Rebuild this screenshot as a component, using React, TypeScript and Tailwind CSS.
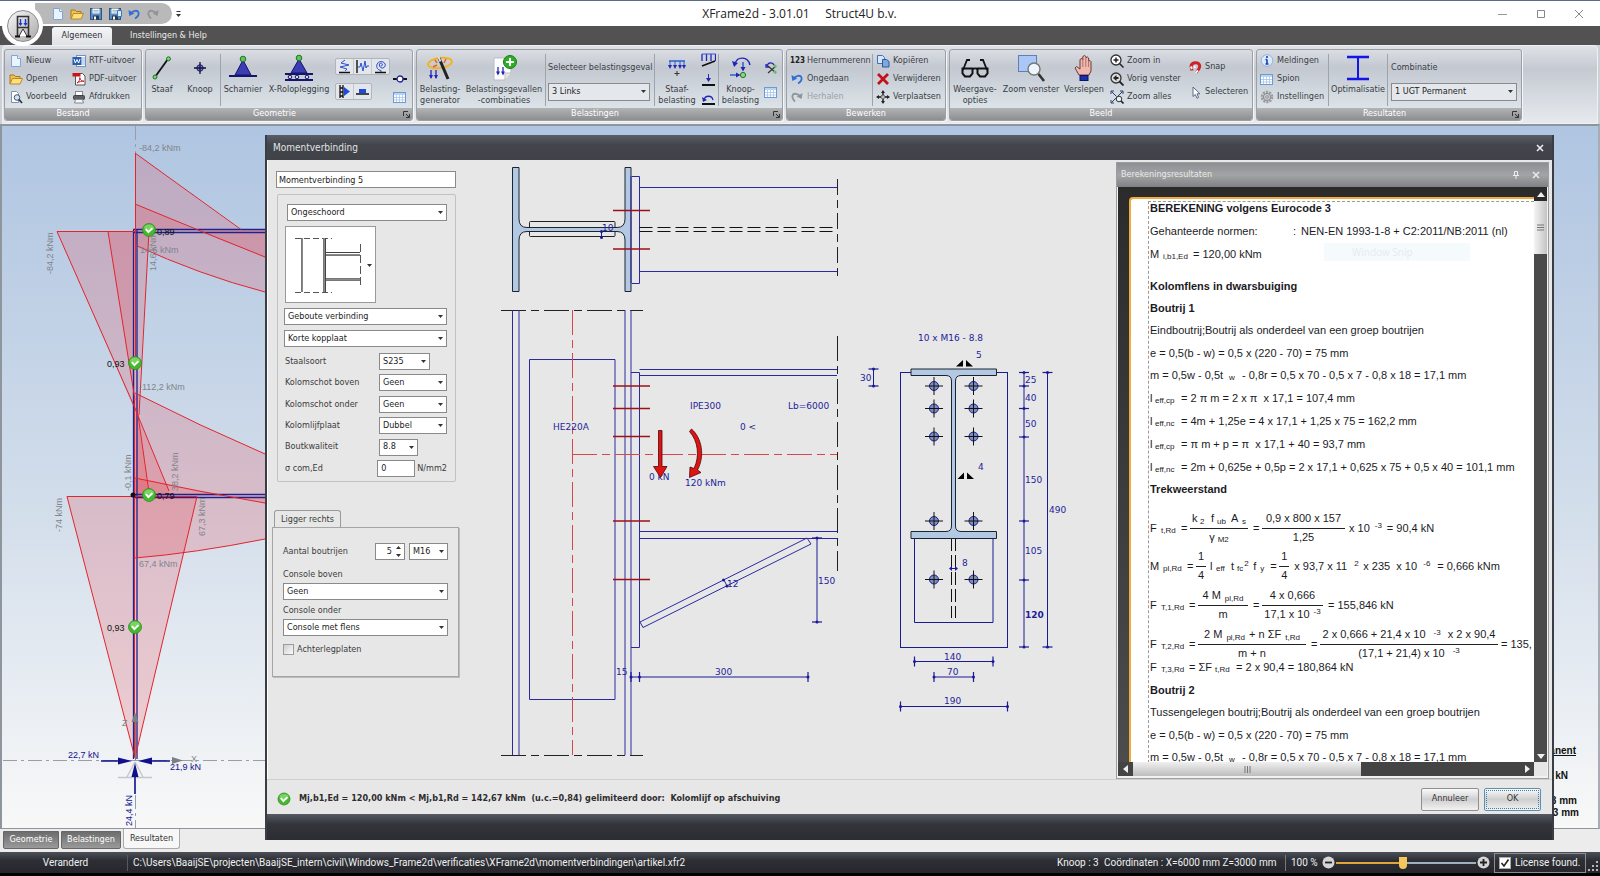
import React from 'react';

type Kids = { children?: React.ReactNode };

/* ---------- form controls ---------- */

function Select({ label, options, className = '', ribbon = false, id }: { label?: string; options: string[]; className?: string; ribbon?: boolean; id?: string }) {
  return (
    <div className={'relative ' + className}>
      <select
        id={id}
        aria-label={label}
        className={
          'block w-full appearance-none border border-[#8a8a8a] pl-[3px] pr-3 text-[9px] text-[#1d1d1d] outline-none ' +
          (ribbon ? 'h-[18px] bg-[#e4e8ec]' : 'h-[17px] bg-white')
        }
      >
        {options.map((o) => (
          <option key={o}>{o}</option>
        ))}
      </select>
      <svg className="pointer-events-none absolute right-1 top-[7px]" width="5" height="3" viewBox="0 0 5 3">
        <path d="M0 0h5L2.500 3z" fill="#333" />
      </svg>
    </div>
  );
}

function FieldRow({ label, id, children }: Kids & { label: string; id: string }) {
  return (
    <div className="flex h-[17px] items-center">
      <label htmlFor={id} className="w-[95px] pl-px">
        {label}
      </label>
      {children}
    </div>
  );
}

/* ---------- ribbon ---------- */

function Svg({ w, h = w, box, children }: Kids & { w: number; h?: number; box?: string }) {
  return (
    <svg width={w} height={h} viewBox={box ?? `0 0 ${w} ${h}`} fill="none" className="shrink-0">
      {children}
    </svg>
  );
}

const NewIcon = () => (
  <Svg w={14}>
    <path d="M2.500 1.500h6l3 3v8h-9z" fill="#eaf4ff" stroke="#7ea6d8" />
    <path d="M8.500 1.500v3h3" stroke="#7ea6d8" fill="#fff" />
  </Svg>
);
const OpenIcon = () => (
  <Svg w={14}>
    <path d="M1 12V3h4l1.500 1.500H11V7" fill="#f2c14b" stroke="#a9781c" />
    <path d="M1 12l2.500-5.500H13.500L11 12z" fill="#ffdf7e" stroke="#b98a25" />
  </Svg>
);
const PreviewIcon = () => (
  <Svg w={14}>
    <path d="M2.500 1.500h5l2 2v9h-7z" fill="#fff" stroke="#8192ab" />
    <circle cx="8" cy="7.500" r="2.800" fill="#cfe3f5" stroke="#44546c" />
    <path d="M10 9.500l3 3.500" stroke="#2c3442" strokeWidth="1.800" />
  </Svg>
);
const WordIcon = () => (
  <Svg w={14}>
    <rect x="4.500" y="1.500" width="9" height="11" fill="#fff" stroke="#6f93c8" />
    <path d="M10 4h3M10 6h3M10 8h3M10 10h3" stroke="#8fb0dc" />
    <rect x="0.500" y="3" width="9" height="8" fill="#2a5db0" />
    <path d="M2 5l1.300 4L5 5.500 6.600 9 8 5" stroke="#fff" />
  </Svg>
);
const PdfIcon = () => (
  <Svg w={14}>
    <path d="M3.500 1.500h7l2.500 2.500v9h-9.500z" fill="#fff" stroke="#555" />
    <rect x="0.500" y="1" width="8" height="3.500" fill="#c8141b" />
    <path d="M5 11c2-1 3-3.500 2.800-5.500 .2 2.500 2 3.700 4.200 3.700-2.500-.2-5 .6-7 1.800z" stroke="#d4202a" />
  </Svg>
);
const PrintIcon = () => (
  <Svg w={14}>
    <rect x="3.500" y="1.500" width="7" height="4" fill="#fff" stroke="#888" />
    <rect x="1.500" y="5.500" width="11" height="4" rx="1" fill="#5b5f66" stroke="#3f4247" />
    <path d="M3.500 9.500h7l1 3.500h-9z" fill="#f4f4f4" stroke="#888" />
  </Svg>
);
const SaveIcon = ({ extra = false }: { extra?: boolean }) => (
  <Svg w={14}>
    <rect x="1.500" y="1.500" width="11" height="11" fill="#5b8cc4" stroke="#2f5585" />
    <rect x="3.500" y="1.500" width="7" height="5" fill="#f4f6f8" />
    <path d="M4.500 3.500h5M4.500 5h5" stroke="#9aa" strokeWidth="0.800" />
    <rect x="4" y="8.500" width="6" height="4" fill="#253a55" />
    <rect x="5" y="9.500" width="2" height="3" fill="#fff" />
    {extra && <path d="M9.500 3.500h4v6h-4z" fill="#d9ecff" stroke="#3d78bd" />}
  </Svg>
);
const UndoIcon = ({ color = '#2f6fd6' }: { color?: string }) => (
  <Svg w={14}>
    <path d="M4 6.500c1.500-3 6.500-3.800 7.500-1 .7 2.500-1 4.500-3.500 6" stroke={color} strokeWidth="1.800" />
    <path d="M1.500 3l.8 6 5-2.500z" fill={color} />
  </Svg>
);
const RedoIcon = () => (
  <Svg w={14}>
    <path d="M10 6.500c-1.500-3-6.500-3.800-7.500-1-.7 2.500 1 4.500 2.500 6" stroke="#8f949b" strokeWidth="1.800" />
    <path d="M12.500 3l-.8 6-5-2.500z" fill="#8f949b" />
  </Svg>
);
const TableIcon = () => (
  <Svg w={13}>
    <rect x="0.500" y="1.500" width="12" height="10" fill="#fff" stroke="#6c9ad6" />
    <rect x="1" y="2" width="11" height="2" fill="#b9d4f3" />
    <path d="M3.500 4v7M6.500 4v7M9.500 4v7M1 6.500h11M1 9h11" stroke="#a8c4e6" strokeWidth="0.800" />
  </Svg>
);
const CheckBall = ({ x, y, r = 6.5 }: { x: number; y: number; r?: number }) => (
  <g>
    <circle cx={x} cy={y} r={r} fill="#46b82e" stroke="#2f8f1f" strokeWidth="0.800" />
    <ellipse cx={x} cy={y - r / 3} rx={r * 0.75} ry={r * 0.5} fill="#9be58a" opacity="0.600" />
    <path d={`M${x - 3.2} ${y - 0.8}l2.600 3 4-4`} stroke="#fff" strokeWidth="1.900" fill="none" />
  </g>
);

function Group({ title, corner, className = '', body = '', children }: Kids & { title: string; corner?: boolean; className?: string; body?: string }) {
  return (
    <section className={'flex h-[72px] shrink-0 flex-col overflow-hidden rounded-[3px] border border-[#9b9fa6] bg-linear-to-b from-[#dadde2] via-[#c3c8d1] via-25% to-[#e4ecef] shadow-[1px_1px_0_#f3f5f7] ' + className}>
      <div className={'flex min-h-0 flex-1 items-start ' + body}>{children}</div>
      <h2 className="flex h-3 items-center justify-center bg-linear-to-b from-[#b2b3b5] to-[#8d8e90] text-[9px] text-white">
        <span className="flex-1 text-center">{title}</span>
        {corner && (
          <button aria-label={title + ' opties'} className="pr-[2px]">
            <Svg w={7}>
              <path d="M0.500 5V0.500H5M3 3l3 3M6.500 3v3.500H3" stroke="#333" />
            </Svg>
          </button>
        )}
      </h2>
    </section>
  );
}

const Sep = ({ className = '' }: { className?: string }) => <div className={'mt-1 h-[52px] w-px shrink-0 bg-[#9ea4ad] ' + className} />;

function BigTool({ icon, lines, className }: { icon: React.ReactNode; lines: string[]; className: string }) {
  return (
    <button className={'flex shrink-0 flex-col items-center whitespace-nowrap pt-[2px] text-[9px] leading-[11px] text-[#3a3d44] ' + className}>
      <span className="flex h-8 items-center justify-center">{icon}</span>
      {lines.map((l) => (
        <span key={l}>{l}</span>
      ))}
    </button>
  );
}

function SmallTool({ icon, label, muted }: { icon: React.ReactNode; label: string; muted?: boolean }) {
  return (
    <button className={'flex h-[18px] items-center gap-[3px] whitespace-nowrap text-[9px] ' + (muted ? 'text-[#9da1a8]' : 'text-[#3a3d44]')}>
      {icon}
      {label}
    </button>
  );
}

const loadArrows = 'M1 1v7M5.500 1v7M10 1v7M14.500 1v7';

function Ribbon() {
  return (
    <div className="mx-[2px] flex gap-[3px] rounded-t-[4px] border border-[#eef0f3] bg-linear-to-b from-[#dfe2e6] via-[#c5cad2] via-30% to-[#e6eaee] px-px pb-[2px] pt-[3px]">
      <Group title="Bestand" className="w-[138px]" body="pl-1 pt-[2px]">
        <div className="w-[63px]">
          <SmallTool icon={<NewIcon />} label="Nieuw" />
          <SmallTool icon={<OpenIcon />} label="Openen" />
          <SmallTool icon={<PreviewIcon />} label="Voorbeeld" />
        </div>
        <div>
          <SmallTool icon={<WordIcon />} label="RTF-uitvoer" />
          <SmallTool icon={<PdfIcon />} label="PDF-uitvoer" />
          <SmallTool icon={<PrintIcon />} label="Afdrukken" />
        </div>
      </Group>

      <Group title="Geometrie" corner className="w-[268px]" body="pl-[2px]">
        <BigTool
          className="w-7"
          lines={['Staaf']}
          icon={
            <Svg w={20} h={24}>
              <path d="M3 21L16 3" stroke="#111" strokeWidth="1.800" />
              <circle cx="3" cy="21" r="2" fill="#7fd07f" stroke="#1e7a1e" />
              <circle cx="16.500" cy="2.800" r="2" fill="#7fd07f" stroke="#1e7a1e" />
            </Svg>
          }
        />
        <BigTool
          className="ml-2 w-8"
          lines={['Knoop']}
          icon={
            <Svg w={14}>
              <circle cx="7" cy="7" r="3.200" fill="#8080d8" stroke="#20206a" />
              <path d="M7 1v12M1 7h12" stroke="#10103c" strokeWidth="1.300" />
            </Svg>
          }
        />
        <Sep className="ml-1" />
        <BigTool
          className="ml-[2px] w-10"
          lines={['Scharnier']}
          icon={
            <Svg w={28} h={26}>
              <path d="M14 5l8 15H6z" fill="#3c3cb4" stroke="#15156a" />
              <path d="M0 21h28" stroke="#15156a" strokeWidth="2" />
              <circle cx="14" cy="4" r="2.800" fill="#63c163" stroke="#1e7a1e" />
            </Svg>
          }
        />
        <BigTool
          className="ml-[3px] w-[66px]"
          lines={['X-Roloplegging']}
          icon={
            <Svg w={28} h={28}>
              <path d="M14 5l8 14H6z" fill="#3c3cb4" stroke="#15156a" />
              <path d="M0 20h28M0 26h28" stroke="#15156a" strokeWidth="1.800" />
              <circle cx="5" cy="23" r="1.800" fill="#ddd" stroke="#15156a" />
              <circle cx="12" cy="23" r="1.800" fill="#ddd" stroke="#15156a" />
              <circle cx="22" cy="23" r="1.800" fill="#ddd" stroke="#15156a" />
              <circle cx="14" cy="4" r="2.800" fill="#63c163" stroke="#1e7a1e" />
            </Svg>
          }
        />
        <div className="ml-[3px] flex flex-col items-start gap-2 pt-2">
          <div className="flex rounded-[2px] border border-[#b0b5bc] bg-[#e3e6ea]">
            <button aria-label="Veer verticaal" className="px-[2px]">
              <Svg w={13} h={15}>
                <path d="M7 1l-4 3 8 2-9 2 7 2-2 2" stroke="#2b4fd0" />
                <path d="M1 13.500h11" stroke="#111" strokeWidth="1.400" />
              </Svg>
            </button>
            <button aria-label="Veer horizontaal" className="border-x border-[#c4c8ce] px-[2px]">
              <Svg w={13} h={15}>
                <path d="M1 1v13" stroke="#111" strokeWidth="1.400" />
                <path d="M2 8h2l1-4 2 8 2-10 1 7 1-2h2" stroke="#2b4fd0" />
              </Svg>
            </button>
            <button aria-label="Rotatieveer" className="px-[2px]">
              <Svg w={13} h={15}>
                <path d="M6.500 7a1.500 1.500 0 1 0-1-2 3 3 0 1 0 5-1A4.500 4.500 0 1 0 7 11.500v2" stroke="#2b4fd0" />
                <path d="M1 13.500h11" stroke="#111" strokeWidth="1.400" />
              </Svg>
            </button>
          </div>
          <div className="flex rounded-[2px] border border-[#b0b5bc] bg-[#e3e6ea]">
            <button aria-label="Rolverbinding" className="border-r border-[#c4c8ce] px-[2px]">
              <Svg w={13} h={15}>
                <path d="M2 1v13M5 1v13M2 4h3M2 8h3M2 12h3" stroke="#111" strokeWidth="1.300" />
                <path d="M6 3l6 4.500L6 12z" fill="#1d4be0" />
              </Svg>
            </button>
            <button aria-label="Inklemming" className="px-[2px]">
              <Svg w={13} h={15}>
                <rect x="3" y="5" width="7" height="4" fill="#1d4be0" />
                <path d="M0 10h13" stroke="#111" strokeWidth="1.600" />
              </Svg>
            </button>
          </div>
        </div>
        <div className="ml-[3px] flex flex-col gap-[5px] pt-[22px]">
          <Svg w={14}>
            <path d="M0 7h4M10 7h4" stroke="#111" strokeWidth="2" />
            <circle cx="7" cy="7" r="3" fill="#fff" stroke="#2828a0" strokeWidth="1.300" />
          </Svg>
          <TableIcon />
        </div>
      </Group>

      <Group title="Belastingen" corner className="w-[367px]">
        <BigTool
          className="w-[46px]"
          lines={['Belasting-', 'generator']}
          icon={
            <Svg w={28}>
              <ellipse cx="14" cy="9" rx="12" ry="5" stroke="#f0b429" strokeWidth="2" transform="rotate(-8 14 9)" />
              <path d="M13 4l9 21" stroke="#222" strokeWidth="3" />
              <path d="M12.500 3l2 4.500" stroke="#ddd" strokeWidth="2" />
              <path d="M9 6l2 3M20 5l-2 4M7 13l4-2" stroke="#e8641e" strokeWidth="1.500" />
              <path d="M5 16v8M10 16v8" stroke="#2326b5" strokeWidth="1.300" />
              <path d="M3 21l2 4 2-4zM8 21l2 4 2-4z" fill="#2326b5" />
            </Svg>
          }
        />
        <BigTool
          className="w-[82px]"
          lines={['Belastingsgevallen', '-combinaties']}
          icon={
            <Svg w={28}>
              <path d="M4 4h17v15l-6 7H4z" fill="#fdfdfd" stroke="#b9bdc4" />
              <path d="M21 19h-6v7" fill="#e4e6ea" stroke="#b9bdc4" />
              <path d="M8 13v7M13 13v7" stroke="#2326b5" strokeWidth="1.300" />
              <path d="M6 17.500l2 4 2-4zM11 17.500l2 4 2-4z" fill="#2326b5" />
              <circle cx="20" cy="8" r="6.500" fill="#2eae25" stroke="#1b7d15" />
              <path d="M20 4v8M16 8h8" stroke="#fff" strokeWidth="2" />
            </Svg>
          }
        />
        <Sep />
        <div className="ml-[2px] flex w-[102px] flex-col pt-[11px] text-[9px] text-[#3a3d44]">
          <label htmlFor="lc" className="whitespace-nowrap leading-[12px]">
            Selecteer belastingsgeval
          </label>
          <Select id="lc" ribbon className="mt-[10px]" options={['3 Links', '1 Permanent', '2 Veranderlijk']} />
        </div>
        <Sep className="ml-1" />
        <BigTool
          className="w-[44px]"
          lines={['Staaf-', 'belasting']}
          icon={
            <Svg w={18} h={18}>
              <path d="M1 2h16" stroke="#2c5fd0" strokeWidth="1.600" />
              <path d="M2 2v5M7 2v5M12 2v5M16 2v5" stroke="#2c5fd0" />
              <path d="M0 6l2 4 2-4zM5 6l2 4 2-4zM10 6l2 4 2-4zM14 6l2 4 2-4z" fill="#2326b5" />
              <path d="M9 12v5M6.500 14.500h5" stroke="#333" />
            </Svg>
          }
        />
        <div className="flex w-[18px] flex-col items-center gap-[5px] pt-[3px]">
          <Svg w={15}>
            <path d={loadArrows} stroke="#2326b5" strokeWidth="1.300" />
            <path d="M1 1h14" stroke="#2c5fd0" />
            <path d="M1 13L14 8" stroke="#111" strokeWidth="1.800" />
          </Svg>
          <Svg w={15}>
            <path d="M7.500 1v6" stroke="#2326b5" />
            <path d="M5 5l2.500 4L10 5z" fill="#2326b5" />
            <path d="M1 12h13" stroke="#111" strokeWidth="1.800" />
          </Svg>
          <Svg w={15} h={13}>
            <path d="M3 7c1-5 8-5 9 0" stroke="#2326b5" strokeWidth="1.300" />
            <path d="M1 4l1 5 4-2z" fill="#2326b5" />
            <path d="M1 11h13" stroke="#111" strokeWidth="1.800" />
          </Svg>
        </div>
        <Sep className="ml-px" />
        <BigTool
          className="w-[43px]"
          lines={['Knoop-', 'belasting']}
          icon={
            <Svg w={24}>
              <path d="M6 8C8 0 19 0 21 9" stroke="#2326b5" strokeWidth="1.400" />
              <path d="M3 5l2 6 4-4z" fill="#2326b5" />
              <path d="M14 6v7M1 19h7" stroke="#2c5fd0" strokeWidth="1.500" />
              <path d="M11.500 11l2.500 4.500L16.500 11zM7 16.500l4.500 2.500L7 21.500z" fill="#2326b5" />
              <circle cx="14" cy="19" r="2.600" fill="#8fd08f" stroke="#1e7a1e" />
            </Svg>
          }
        />
        <div className="flex flex-col items-center gap-3 pl-[2px] pt-[11px]">
          <Svg w={13}>
            <path d="M3 5c1-4 6-4 7-1M2 3v3h3" stroke="#2326b5" strokeWidth="1.300" />
            <path d="M4 5l8 7M12 5l-8 7" stroke="#333" strokeWidth="1.200" />
            <circle cx="11" cy="11" r="1.600" fill="#63c163" />
            <circle cx="11" cy="5" r="1.600" fill="#63c163" />
          </Svg>
          <TableIcon />
        </div>
      </Group>

      <Group title="Bewerken" className="w-[160px]" body="pl-[3px] pt-[2px]">
        <div className="w-[82px]">
          <SmallTool icon={<b className="w-[14px] text-[8px] leading-none text-[#222]">123</b>} label="Hernummerenn" />
          <SmallTool icon={<UndoIcon />} label="Ongedaan" />
          <SmallTool icon={<RedoIcon />} label="Herhalen" muted />
        </div>
        <div className="mt-[2px] h-[52px] w-px shrink-0 bg-[#9ea4ad]" />
        <div className="pl-[3px]">
          <SmallTool
            icon={
              <Svg w={14}>
                <path d="M1.500 1.500h5l2 2v6h-7z" fill="#d5e6fb" stroke="#3f72b8" />
                <path d="M6.500 5.500h4l2.500 2v5.500H6.500z" fill="#7ea9e0" stroke="#2c5a9c" />
              </Svg>
            }
            label="Kopiëren"
          />
          <SmallTool
            icon={
              <Svg w={14}>
                <path d="M2 2l10 10M12 2L2 12" stroke="#c4101a" strokeWidth="2.800" />
              </Svg>
            }
            label="Verwijderen"
          />
          <SmallTool
            icon={
              <Svg w={14}>
                <path d="M7 2v3M7 9v3M2 7h3M9 7h3" stroke="#111" strokeWidth="1.400" />
                <path d="M5 3l2-3 2 3zM5 11l2 3 2-3zM3 5L0 7l3 2zM11 5l3 2-3 2z" fill="#222" />
                <rect x="5.500" y="5.500" width="3" height="3" fill="#bbb" stroke="#555" strokeWidth="0.600" />
              </Svg>
            }
            label="Verplaatsen"
          />
        </div>
      </Group>

      <Group title="Beeld" className="w-[304px]">
        <BigTool
          className="w-[50px]"
          lines={['Weergave-', 'opties']}
          icon={
            <Svg w={28} h={20}>
              <path d="M2 12L6 2h3M26 12L22 2h-3" stroke="#111" strokeWidth="1.800" />
              <path d="M1.500 10.500h10v5l-2.500 3H4l-2.500-3zM16.500 10.500h10v5L24 18.500h-5l-2.500-3zM11.500 11.500c1.500-1.500 3.500-1.500 5 0" stroke="#111" strokeWidth="2" />
            </Svg>
          }
        />
        <BigTool
          className="w-[62px]"
          lines={['Zoom venster']}
          icon={
            <Svg w={30} h={30}>
              <rect x="2.500" y="2.500" width="18" height="16" fill="#a9c8f5" stroke="#5f7fb0" />
              <circle cx="18" cy="16" r="6" fill="#eef5fc" stroke="#777" strokeWidth="1.400" />
              <path d="M22.500 21l5.500 7" stroke="#333" strokeWidth="2.600" />
            </Svg>
          }
        />
        <BigTool
          className="w-[44px]"
          lines={['Verslepen']}
          icon={
            <Svg w={20} h={28}>
              <path d="M5 21L1 14l1.500-1.500L6 15V5.500l1.800-1 1 1V2.500l1.800-1 1.200 1v1l1.600-.5 1.200 1v3l1.400-.4 1 1V17l-2 4z" fill="#f0b8ae" stroke="#6a3a38" />
              <path d="M8.800 5v8M11.800 4v9M14.600 6v7" stroke="#a0605c" strokeWidth="0.800" />
              <rect x="6" y="21.500" width="8" height="5" fill="#1b2fa8" stroke="#0b1460" />
            </Svg>
          }
        />
        <div className="w-[79px] pl-[4px] pt-[2px]">
          <SmallTool
            icon={
              <Svg w={14}>
                <circle cx="6" cy="6" r="5" fill="#fff" stroke="#333" strokeWidth="1.300" />
                <path d="M3.500 6h5M6 3.500v5M9.500 9.500l4 4" stroke="#222" strokeWidth="1.500" />
              </Svg>
            }
            label="Zoom in"
          />
          <SmallTool
            icon={
              <Svg w={14}>
                <circle cx="6" cy="6" r="5" fill="#ddd" stroke="#333" strokeWidth="1.300" />
                <path d="M8.500 6h-3M9.500 9.500l4 4" stroke="#222" strokeWidth="1.800" />
                <path d="M6.500 3L3 6l3.500 3z" fill="#222" />
              </Svg>
            }
            label="Vorig venster"
          />
          <SmallTool
            icon={
              <Svg w={14}>
                <path d="M1 4V1h3M10 1h3v3M4 13H1v-3M1.500 1.500l5 5M12.500 1.500l-11 11" stroke="#2b3f66" />
                <circle cx="9" cy="9" r="2.800" fill="#e9f1fa" stroke="#333" />
                <path d="M11 11l2.500 2.500" stroke="#222" strokeWidth="1.600" />
              </Svg>
            }
            label="Zoom alles"
          />
        </div>
        <div className="flex flex-col gap-[7px] pl-1 pt-2">
          <SmallTool
            icon={
              <Svg w={13}>
                <path d="M3 9.500L2 5.500C2.500 1 9 .5 10.500 4c.8 2.500-1 5-3.500 7.500" stroke="#cf2323" strokeWidth="3" />
                <path d="M3 8L1.800 5.500M9 9.500l-2.500 2.200" stroke="#f2f2f2" strokeWidth="2" />
                <circle cx="5.800" cy="6" r="1" fill="#fff" />
              </Svg>
            }
            label="Snap"
          />
          <SmallTool
            icon={
              <Svg w={13}>
                <path d="M4 1v9.500l2.300-2 1.700 3.800 1.600-.8L8 7.800h3z" fill="#fff" stroke="#5a6a85" />
              </Svg>
            }
            label="Selecteren"
          />
        </div>
      </Group>

      <Group title="Resultaten" corner className="w-[266px]">
        <div className="w-[71px] pl-[3px] pt-[2px]">
          <SmallTool
            icon={
              <Svg w={14}>
                <circle cx="7" cy="6.500" r="5.800" fill="#dcebfa" stroke="#8eb2dc" />
                <path d="M7 5.500v4.500M5.500 5.500H7M5.500 10h3" stroke="#1b3fae" strokeWidth="1.600" />
                <circle cx="7" cy="3" r="1.100" fill="#1b3fae" />
              </Svg>
            }
            label="Meldingen"
          />
          <SmallTool icon={<span className="pr-px"><TableIcon /></span>} label="Spion" />
          <SmallTool
            icon={
              <Svg w={14}>
                <circle cx="7" cy="7" r="4.800" stroke="#9a9da2" strokeWidth="3" strokeDasharray="2 1" />
                <circle cx="7" cy="7" r="3.600" fill="#c9cbce" stroke="#8a8d92" />
                <circle cx="7" cy="7" r="1.300" fill="#eee" stroke="#8a8d92" />
              </Svg>
            }
            label="Instellingen"
          />
        </div>
        <Sep />
        <BigTool
          className="w-[58px]"
          lines={['Optimalisatie']}
          icon={
            <Svg w={24} h={28}>
              <path d="M1 3h22M1 25h22" stroke="#1414e6" strokeWidth="2.600" />
              <path d="M12 3v22" stroke="#1414e6" strokeWidth="2" />
            </Svg>
          }
        />
        <Sep />
        <div className="ml-[3px] flex w-[126px] flex-col pt-[11px] text-[9px] text-[#3a3d44]">
          <label htmlFor="comb" className="leading-[12px]">
            Combinatie
          </label>
          <Select id="comb" ribbon className="mt-[10px]" options={['1 UGT Permanent', '2 UGT', '3 BGT']} />
        </div>
      </Group>
    </div>
  );
}

/* ---------- frame model behind the dialog ---------- */

function FrameCanvas() {
  const red = '#e2242c';
  return (
    <svg width="270" height="704" viewBox="0 126 270 704" fill="none" className="font-['Liberation_Sans',Arial,sans-serif] text-[9px]">
      <g stroke="#9a9da2" strokeDasharray="14 4 3 4">
        <path d="M135.500 126v27M135.500 795v34M3 760.500h262" />
      </g>
      <g fill="#f0303a" fillOpacity="0.190">
        <path d="M135 153L240 229.500H265V292Q200 275 135 245z" />
        <path d="M135 204Q165 216 195 230L265 257V230H135z" />
        <path d="M57 231H149L138 415 135 411z" />
        <path d="M108 231H135V401z" />
        <path d="M135 393Q200 426 265 454V539Q195 553 135 558z" />
        <path d="M135 411L169 491 170 496H135z" />
        <path d="M137 415L148 489V496H135z" />
        <path d="M135 478L265 503V496H135z" />
        <path d="M67 496H197L135 758z" />
      </g>
      <g stroke="#22208c" strokeWidth="1.300">
        <path d="M133.500 230v529M137 230v529M133 229.500h132M133 232.500h132M133 494.500h132M133 497.500h132" />
      </g>
      <g stroke={red}>
        <path d="M135.500 153V230M135 153L241 229.500M135 204Q200 231 265 257M135 245Q200 275 265 292M135.500 230v130" />
        <path d="M57 231.500H135M57 231.500L138 415M108 231.500L135 400M149 231L139 415M136 411L169 491M138 415L148.500 489" />
        <path d="M135 393Q200 426 265 454M135 478Q200 492 265 503M135 558Q195 553 265 539M134.500 400v357" />
        <path d="M67 496.500H197M67 496.500L135 758M197 496.500L135 758" />
      </g>
      <circle cx="133" cy="495" r="2.500" fill="#111" />
      <g fill="#82858a">
        <text x="139" y="151">-84,2 kNm</text>
        <text x="140" y="253">14,6 kNm</text>
        <text x="139" y="390">-112,2 kNm</text>
        <text x="139" y="567">67,4 kNm</text>
        <text transform="translate(53 274) rotate(-90)">-84,2 kNm</text>
        <text transform="translate(156 271) rotate(-90)">14,6 kNm</text>
        <text transform="translate(131 491) rotate(-90)">-0,1 kNm</text>
        <text transform="translate(178 491) rotate(-90)">38,2 kNm</text>
        <text transform="translate(62 532) rotate(-90)">-74 kNm</text>
        <text transform="translate(205 536) rotate(-90)">67,3 kNm</text>
        <text x="122" y="726">Z</text>
        <text x="191" y="762">X</text>
      </g>
      <g fill="#111">
        <text x="157" y="235">0,89</text>
        <text x="107" y="367">0,93</text>
        <text x="157" y="499">0,79</text>
        <text x="107" y="631">0,93</text>
      </g>
      <CheckBall x={149} y={230} />
      <CheckBall x={135} y={363} />
      <CheckBall x={149} y={495} />
      <CheckBall x={135} y={627} />
      <path d="M118 777.500h34M135 762l-8 15M135 762l8 15" stroke="#c4c6ca" strokeWidth="1.300" />
      <path d="M135 712l-3.500 10h7zM172 757l11 3.500-11 3.500z" fill="#7d7f84" />
      <path d="M135.500 720v40" stroke="#7d7f84" />
      <g stroke="#10108c" strokeWidth="1.600" fill="#10108c">
        <path d="M101 761h22M148 761h22M135 794v-20" />
        <path stroke="none" d="M118 757.500l14 3.500-14 3.500zM152 757.500l-14 3.500 14 3.500zM131.500 777l3.500-14 3.500 14z" />
      </g>
      <g fill="#10108c">
        <text x="68" y="758">22,7 kN</text>
        <text x="170" y="770">21,9 kN</text>
        <text transform="translate(132 826) rotate(-90)">24,4 kN</text>
      </g>
    </svg>
  );
}

/* ---------- connection drawing ---------- */

const sectionTop =
  'M512.500 167.500H519V219Q519 227.500 527 227.500H617Q625 227.500 625 219V167.500H631V291.500H625V240Q625 231.500 617 231.500H527Q519 231.500 519 240V291.500H512.500Z';
const sectionBeam =
  'M911 369H996.500V375.500H961Q955.500 375.500 955.500 381V526Q955.500 531.500 961 531.500H996.500V538.500H911V531.500H946Q951.500 531.500 951.500 526V381Q951.500 375.500 946 375.500H911Z';

function HDim({ x1, x2, y, ticks }: { x1: number; x2: number; y: number; ticks: number[] }) {
  return (
    <g stroke="#1a1a96">
      <path d={`M${x1} ${y}H${x2}`} />
      {ticks.map((t) => (
        <g key={t}>
          <path d={`M${t} ${y - 5}v10`} strokeWidth="1.200" />
          <circle cx={t} cy={y} r="1.500" fill="#1a1a96" stroke="none" />
        </g>
      ))}
    </g>
  );
}

function VDim({ y1, y2, x, ticks }: { y1: number; y2: number; x: number; ticks: number[] }) {
  return (
    <g stroke="#1a1a96">
      <path d={`M${x} ${y1}V${y2}`} />
      {ticks.map((t) => (
        <g key={t}>
          <path d={`M${x - 5} ${t}h10`} strokeWidth="1.200" />
          <circle cx={x} cy={t} r="1.500" fill="#1a1a96" stroke="none" />
        </g>
      ))}
    </g>
  );
}

function ConnectionDrawing() {
  const bolts = [386, 408.5, 436.5, 521, 579.5];
  return (
    <svg width="632" height="616" viewBox="480 162 632 616" fill="none" className="font-['DejaVu_Sans',Verdana,sans-serif] text-[9px]">
      {/* plan */}
      <rect x="529.500" y="221.500" width="85.500" height="15" rx="1" stroke="#222" />
      <path d={sectionTop} fill="#b3c8e2" stroke="#1c2430" />
      <g stroke="#2a2aa0">
        <path d="M631.500 176.500H639.500V283.500H631.500M631 176.500V283M639.500 187.500H837M639.500 271.500H837" />
      </g>
      <path d="M639.500 227.500H837M639.500 231.500H837" stroke="#111" strokeDasharray="13 5" />
      <path d="M601.500 231v7" stroke="#1a1a96" />
      <circle cx="601.500" cy="231.500" r="1.500" fill="#1a1a96" />
      <circle cx="601.500" cy="237.500" r="1.500" fill="#1a1a96" />

      {/* break lines */}
      <g stroke="#222" strokeDasharray="25 5 8 5">
        <path d="M501 310.500H643M501 755.500H643M837.500 336V571" />
        <path d="M837.500 179V280" strokeDasharray="16 5 8 5" />
      </g>

      {/* elevation */}
      <g stroke="#2a2aa0">
        <path d="M512.500 310V755M519 310V755M625 310V755M631 310V755" />
        <path d="M529.500 359.500H615V699.500H529.500Z" />
        <path d="M631 372.500H639.500V647.500H631" />
        <path d="M639.500 369.500H837M639.500 375.500H837M639.500 531.500H837M639.500 538.500H837" />
        <path d="M640 622L807 538 811 544 643 627.500Z" />
        <path d="M724 580l3 6" />
      </g>
      <circle cx="723.500" cy="580" r="1.500" fill="#1a1a96" />
      <circle cx="727" cy="586" r="1.500" fill="#1a1a96" />
      <g stroke="#d8474c" strokeDasharray="25 5 8 5">
        <path d="M572.500 310V755M572 454.500H837" />
      </g>
      <g stroke="#9c1018" strokeWidth="1.600">
        {[210.5, 249, ...bolts].map((y) => (
          <path key={y} d={`M613 ${y}H650`} />
        ))}
      </g>

      {/* section */}
      <rect x="900.500" y="372.500" width="107" height="275" stroke="#1a1a96" />
      <path d="M914.500 538V622.500H993V538" stroke="#1a1a96" />
      <path d="M951.500 538V618M955.500 538V618" stroke="#111" strokeDasharray="13 4" />
      <path d={sectionBeam} fill="#b3c8e2" stroke="#1c2430" />
      {bolts.map((y) =>
        [934, 973.5].map((x) => (
          <g key={`${x}-${y}`}>
            <circle cx={x} cy={y} r="4.500" fill="#7d8fb8" stroke="#1a1a96" />
            <path d={`M${x - 9} ${y}h18M${x} ${y - 9}v18`} stroke="#111" />
          </g>
        )),
      )}
      <path d="M956 366.500L963 360V366.500ZM966 360V366.500H973ZM957.500 479L964 472.500V479ZM967 472.500V479H974Z" fill="#000" />

      {/* dimensions */}
      <VDim x={873.5} y1={369} y2={386} ticks={[369, 386]} />
      <VDim x={1024} y1={372} y2={647} ticks={[372.5, 386, 408.5, 437, 521, 580, 647]} />
      <VDim x={1047.5} y1={372} y2={647} ticks={[372.5, 647]} />
      <VDim x={817} y1={538} y2={622} ticks={[538, 622]} />
      <HDim x1={631} x2={808} y={677} ticks={[631, 639.5, 808]} />
      <HDim x1={914} x2={993} y={661.5} ticks={[914.5, 993]} />
      <HDim x1={934} x2={973} y={677} ticks={[934, 973.5]} />
      <HDim x1={900} x2={1007} y={706.5} ticks={[900.5, 1007.5]} />
      <HDim x1={950} x2={957} y={568.5} ticks={[]} />
      <path d="M949 568.500l3-2.500v5zM958 568.500l-3-2.500v5z" fill="#1a1a96" />

      <g fill="#1e1e9a">
        <text x="602" y="231">10</text>
        <text x="553" y="430">HE220A</text>
        <text x="690" y="409">IPE300</text>
        <text x="788" y="409">Lb=6000</text>
        <text x="740" y="430">0 &lt;</text>
        <text x="649" y="480">0 kN</text>
        <text x="685" y="486">120 kNm</text>
        <text x="727" y="587">12</text>
        <text x="818" y="584">150</text>
        <text x="616" y="675">15</text>
        <text x="715" y="675">300</text>
        <text x="860" y="381">30</text>
        <text x="918" y="341">10 x M16 - 8.8</text>
        <text x="976" y="358">5</text>
        <text x="978" y="470">4</text>
        <text x="962" y="566">8</text>
        <text x="1025" y="383">25</text>
        <text x="1025" y="401">40</text>
        <text x="1025" y="427">50</text>
        <text x="1025" y="483">150</text>
        <text x="1025" y="554">105</text>
        <text x="1025" y="618" fontWeight="700">120</text>
        <text x="1049" y="513">490</text>
        <text x="944" y="660">140</text>
        <text x="947" y="675">70</text>
        <text x="944" y="704">190</text>
      </g>

      {/* internal forces */}
      <path d="M658.500 430.500h3.500V466.500H667L660.500 477.500 653.500 466.500H658.500Z" fill="#e01212" stroke="#4a0808" strokeWidth="0.800" />
      <path
        d="M691.500 429C702 438 705 456 697.500 470L701 472.500 689.500 477.500 690 467 694 468.500C700 456 698 441 689.500 431.500Z"
        fill="#e01212"
        stroke="#4a0808"
        strokeWidth="0.800"
      />
    </svg>
  );
}

/* ---------- report ---------- */

const Sub = ({ children, className = '' }: Kids & { className?: string }) => <span className={'shrink-0 whitespace-pre pt-[5px] text-[8px] leading-[10px] ' + className}>{children}</span>;
const Sup = ({ children, className = '' }: Kids & { className?: string }) => <span className={'shrink-0 whitespace-pre pb-[5px] text-[8px] leading-[10px] ' + className}>{children}</span>;
const T = ({ children, className = '' }: Kids & { className?: string }) => <span className={'shrink-0 whitespace-pre ' + className}>{children}</span>;
const Line = ({ children, className = '' }: Kids & { className?: string }) => <p className={'flex h-3 items-center leading-3 ' + className}>{children}</p>;
const Heading = ({ children, className = '' }: Kids & { className?: string }) => <h3 className={'h-3 whitespace-nowrap font-bold leading-3 ' + className}>{children}</h3>;
const Formula = ({ children, className = '' }: Kids & { className?: string }) => <div className={'flex h-[35px] items-center ' + className}>{children}</div>;

function Frac({ num, den, className }: { num: React.ReactNode; den: React.ReactNode; className: string }) {
  return (
    <span className={'flex shrink-0 flex-col ' + className}>
      <span className="flex h-[17px] items-start justify-center border-b border-[#222] leading-[13px]">{num}</span>
      <span className="flex h-[17px] items-center justify-center leading-[13px]">{den}</span>
    </span>
  );
}

function EffLine({ sub, text }: { sub: string; text: string }) {
  return (
    <Line className="mt-[11px]">
      <T className="w-[5px]">l</T>
      <Sub className="w-[26px]">{sub}</Sub>
      <T>{text}</T>
    </Line>
  );
}

function MLine() {
  return (
    <Line className="mt-[10px]">
      <T className="w-[79px]">m = 0,5w - 0,5t</T>
      <Sub className="w-[13px]">w</Sub>
      <T>- 0,8r = 0,5 x 70 - 0,5 x 7 - 0,8 x 18 = 17,1 mm</T>
    </Line>
  );
}

function Report() {
  return (
    <div className="ml-[17px] mt-[2px] border-l border-t border-dashed border-[#9a9a9a] pl-px font-['Liberation_Sans',Arial,sans-serif] text-[11px] text-[#1b1b1f]">
      <Heading>BEREKENING volgens Eurocode 3</Heading>
      <Line className="mt-[11px]">
        <T className="w-[143px]">Gehanteerde normen:</T>
        <T className="w-2">:</T>
        <T>NEN-EN 1993-1-8 + C2:2011/NB:2011 (nl)</T>
      </Line>
      <Line className="mt-[11px]">
        <T className="w-[13px]">M</T>
        <Sub className="w-[30px]">i,b1,Ed</Sub>
        <T>= 120,00 kNm</T>
      </Line>
      <Heading className="mt-5">Kolomflens in dwarsbuiging</Heading>
      <Heading className="mt-[10px]">Boutrij 1</Heading>
      <Line className="mt-[10px]">Eindboutrij;Boutrij als onderdeel van een groep boutrijen</Line>
      <Line className="mt-[11px]">e = 0,5(b - w) = 0,5 x (220 - 70) = 75 mm</Line>
      <MLine />
      <EffLine sub="eff,cp" text="= 2 π m = 2 x π  x 17,1 = 107,4 mm" />
      <EffLine sub="eff,nc" text="= 4m + 1,25e = 4 x 17,1 + 1,25 x 75 = 162,2 mm" />
      <EffLine sub="eff,cp" text="= π m + p = π  x 17,1 + 40 = 93,7 mm" />
      <EffLine sub="eff,nc" text="= 2m + 0,625e + 0,5p = 2 x 17,1 + 0,625 x 75 + 0,5 x 40 = 101,1 mm" />
      <Heading className="mt-[10px]">Trekweerstand</Heading>
      <Formula className="mt-4">
        <T className="w-[11px]">F</T>
        <Sub className="w-5">t,Rd</Sub>
        <T className="w-[9px]">=</T>
        <Frac
          className="w-[58px]"
          num={
            <>
              <T className="w-2">k</T>
              <Sub className="w-[11px]">2</Sub>
              <T>f</T>
              <Sub className="w-[17px] pl-[3px]">ub</Sub>
              <T className="w-[11px]">A</T>
              <Sub>s</Sub>
            </>
          }
          den={
            <>
              <T>γ</T>
              <Sub className="pl-[3px]">M2</Sub>
            </>
          }
        />
        <T className="w-[14px] pl-[5px]">=</T>
        <Frac className="w-[83px]" num={<T>0,9 x 800 x 157</T>} den={<T>1,25</T>} />
        <T className="pl-1">x 10</T>
        <Sup className="w-[17px] pl-[5px]">-3</Sup>
        <T>= 90,4 kN</T>
      </Formula>
      <Formula className="mt-[3px]">
        <T className="w-[13px]">M</T>
        <Sub className="w-6">pl,Rd</Sub>
        <T className="w-[9px]">=</T>
        <Frac className="w-[10px]" num={<T>1</T>} den={<T>4</T>} />
        <T className="w-[10px] pl-1">l</T>
        <Sub className="w-[15px]">eff</Sub>
        <T className="w-[6px]">t</T>
        <Sub>fc</Sub>
        <Sup className="w-[10px] pl-px">2</Sup>
        <T className="w-[7px]">f</T>
        <Sub className="w-[10px]">y</Sub>
        <T className="w-[9px]">=</T>
        <Frac className="w-[10px]" num={<T>1</T>} den={<T>4</T>} />
        <T className="w-[65px] pl-[5px]">x 93,7 x 11</T>
        <Sup className="w-[9px]">2</Sup>
        <T className="w-[60px]">x 235  x 10</T>
        <Sup className="w-[14px]">-6</Sup>
        <T>= 0,666 kNm</T>
      </Formula>
      <Formula className="mt-1">
        <T className="w-[11px]">F</T>
        <Sub className="w-[28px]">T,1,Rd</Sub>
        <T className="w-[9px]">=</T>
        <Frac
          className="w-[50px]"
          num={
            <>
              <T>4 M</T>
              <Sub className="pl-1">pl,Rd</Sub>
            </>
          }
          den={<T>m</T>}
        />
        <T className="w-[14px] pl-[5px]">=</T>
        <Frac
          className="w-[61px]"
          num={<T>4 x 0,666</T>}
          den={
            <>
              <T>17,1 x 10</T>
              <Sup className="pl-1">-3</Sup>
            </>
          }
        />
        <T className="pl-[5px]">= 155,846 kN</T>
      </Formula>
      <Formula className="mt-1">
        <T className="w-[11px]">F</T>
        <Sub className="w-[28px]">T,2,Rd</Sub>
        <T className="w-[9px]">=</T>
        <Frac
          className="w-[108px]"
          num={
            <>
              <T>2 M</T>
              <Sub className="px-1">pl,Rd</Sub>
              <T>+ n ΣF</T>
              <Sub className="pl-1">t,Rd</Sub>
            </>
          }
          den={<T>m + n</T>}
        />
        <T className="w-[14px] pl-[5px]">=</T>
        <Frac
          className="w-[178px]"
          num={
            <>
              <T>2 x 0,666 + 21,4 x 10</T>
              <Sup className="pl-2 pr-1">-3</Sup>
              <T> x 2 x 90,4</T>
            </>
          }
          den={
            <>
              <T>(17,1 + 21,4) x 10</T>
              <Sup className="pl-2">-3</Sup>
            </>
          }
        />
        <T className="pl-[3px]">= 135,</T>
      </Formula>
      <Line className="-mt-px">
        <T className="w-[11px]">F</T>
        <Sub className="w-[28px]">T,3,Rd</Sub>
        <T className="w-[26px]">= ΣF</T>
        <Sub className="w-[21px]">t,Rd</Sub>
        <T>= 2 x 90,4 = 180,864 kN</T>
      </Line>
      <Heading className="mt-[11px]">Boutrij 2</Heading>
      <Line className="mt-[10px]">Tussengelegen boutrij;Boutrij als onderdeel van een groep boutrijen</Line>
      <Line className="mt-[11px]">e = 0,5(b - w) = 0,5 x (220 - 70) = 75 mm</Line>
      <MLine />
    </div>
  );
}

function ResultsPanel() {
  return (
    <aside className="mt-[2px] flex w-[433px] shrink-0 flex-col border border-[#9c9da0] bg-[#f2f2f2]">
      <header className="flex h-6 items-center bg-linear-to-b from-[#8d8e91] via-[#a3a4a6] to-[#808184] pl-1 pr-2 text-[9px] text-[#e9e9e9]">
        <h2 className="flex-1">Berekeningsresultaten</h2>
        <button aria-label="Vastzetten" className="mr-3">
          <Svg w={8}>
            <path d="M2.500 0.500h3v4h-3zM1 4.500h6M4 5v3" stroke="#eee" />
          </Svg>
        </button>
        <button aria-label="Paneel sluiten">
          <Svg w={8}>
            <path d="M1 1l6 6M7 1L1 7" stroke="#eee" strokeWidth="1.400" />
          </Svg>
        </button>
      </header>
      <div className="mx-px mb-[2px] flex min-h-0 flex-1 flex-col">
        <div className="flex min-h-0 flex-1">
          <div className="relative min-w-0 flex-1 overflow-hidden bg-linear-to-b from-[#2b2b2b] to-[#4c4c4c] pl-[11px] pt-[10px]">
            <div className="h-full overflow-hidden rounded-tl-[4px] border-l-2 border-t-2 border-[#f0ac40] bg-white">
              <Report />
            </div>
            <div className="absolute left-[206px] top-[56px] flex h-[18px] w-[146px] items-center bg-[#f5fafd] pl-7 font-['Open_Sans',sans-serif] text-[10px] text-[#e4ecf0]">Window Snip</div>
          </div>
          <div className="flex w-[13px] flex-col items-center bg-[#4a4a4a]">
            <button aria-label="Omhoog" className="flex h-[14px] w-full items-center justify-center bg-[#2b2b2b]">
              <Svg w={8} h={5}>
                <path d="M4 0l4 5H0z" fill="#f0f0f0" />
              </Svg>
            </button>
            <div className="flex h-[53px] w-full items-center justify-center bg-linear-to-r from-[#f4f4f4] to-[#c4c4c4]">
              <Svg w={7} h={7}>
                <path d="M0 1h7M0 3.500h7M0 6h7" stroke="#777" />
              </Svg>
            </div>
            <div className="flex-1" />
            <button aria-label="Omlaag" className="flex h-3 w-full items-center justify-center">
              <Svg w={8} h={5}>
                <path d="M4 5L0 0h8z" fill="#f0f0f0" />
              </Svg>
            </button>
          </div>
        </div>
        <div className="flex h-[14px]">
          <div className="flex flex-1 items-center bg-[#444]">
            <button aria-label="Links" className="flex w-[15px] justify-center">
              <Svg w={5} h={8}>
                <path d="M0 4l5-4v8z" fill="#f0f0f0" />
              </Svg>
            </button>
            <div className="flex h-full w-[228px] items-center justify-center bg-linear-to-b from-[#f0f0f0] to-[#bdbdbd]">
              <Svg w={7} h={7}>
                <path d="M1 0v7M3.500 0v7M6 0v7" stroke="#777" />
              </Svg>
            </div>
            <div className="flex-1" />
            <button aria-label="Rechts" className="flex w-[13px] justify-center">
              <Svg w={5} h={8}>
                <path d="M5 4L0 0v8z" fill="#f0f0f0" />
              </Svg>
            </button>
          </div>
          <div className="w-[13px] bg-[#e6e6e6]" />
        </div>
      </div>
    </aside>
  );
}

/* ---------- dialog ---------- */

function ConnectionForm() {
  return (
    <div className="w-[212px] shrink-0 pl-1 text-[9px] text-[#3c3c3c]">
      <input aria-label="Naam verbinding" defaultValue="Momentverbinding 5" className="ml-1 mt-[11px] block h-[17px] w-[180px] border border-[#8a8a8a] bg-white px-[2px] text-[#1d1d1d] outline-none" />
      <div className="ml-[5px] mt-[6px] w-[179px] rounded-[2px] border border-[#c2c2c2] pb-1 pl-[6px] pr-2 pt-[9px]">
        <Select label="Schoring" className="ml-[3px]" options={['Ongeschoord', 'Geschoord']} />
        <button aria-label="Type knoop" className="ml-px mt-[5px] flex h-[77px] w-[91px] items-center border border-[#999] bg-white">
          <Svg w={89} h={75}>
            <g stroke="#555">
              <path d="M9 11.500h37M9 65.500h37" strokeDasharray="6 3" />
              <path d="M74.500 17v43" strokeDasharray="8 3" />
            </g>
            <g stroke="#777">
              <path d="M15.500 11v54M37.500 11v54M39 28.500h35M39 51.500h35M39 53.500h35" />
            </g>
            <g stroke="#8a8a8a">
              <path d="M16.500 11v54M38.500 11v54M39 27.500h35M39 52.500h35" />
            </g>
            <g stroke="#444">
              <path d="M39.500 11v54M39 25.500h35" />
            </g>
            <path d="M81 37h5l-2.500 3z" fill="#333" />
          </Svg>
        </button>
        <Select label="Verbindingstype" className="mt-[5px]" options={['Geboute verbinding', 'Gelaste verbinding']} />
        <Select label="Kopplaat" className="mt-[5px]" options={['Korte kopplaat', 'Lange kopplaat']} />
        <div className="mt-[6px] flex h-[124px] flex-col justify-between">
          <FieldRow label="Staalsoort" id="staal">
            <Select id="staal" className="w-[51px]" options={['S235', 'S275', 'S355']} />
          </FieldRow>
          <FieldRow label="Kolomschot boven" id="ksb">
            <Select id="ksb" className="w-[68px]" options={['Geen', 'Enkel', 'Dubbel']} />
          </FieldRow>
          <FieldRow label="Kolomschot onder" id="kso">
            <Select id="kso" className="w-[68px]" options={['Geen', 'Enkel', 'Dubbel']} />
          </FieldRow>
          <FieldRow label="Kolomlijfplaat" id="klp">
            <Select id="klp" className="w-[68px]" options={['Dubbel', 'Enkel', 'Geen']} />
          </FieldRow>
          <FieldRow label="Boutkwaliteit" id="bk">
            <Select id="bk" className="w-[39px]" options={['8.8', '10.9']} />
          </FieldRow>
          <FieldRow label="σ com,Ed" id="sig">
            <input id="sig" defaultValue="0" className="h-[17px] w-[38px] border border-[#8a8a8a] bg-white px-[3px] text-[#1d1d1d] outline-none" />
            <span className="pl-[2px]">N/mm2</span>
          </FieldRow>
        </div>
      </div>

      <div className="mt-7">
        <button role="tab" className="ml-[2px] block h-[18px] w-[67px] rounded-t-[3px] border border-b-0 border-[#9a9a9a] bg-[#e7e7e7]">Ligger rechts</button>
        <div className="-mt-px h-[150px] w-[187px] border border-[#a5a5a5] pl-[10px] pr-[10px] pt-[15px] shadow-[1px_1px_0_#bbb]">
          <div className="flex h-[17px] items-center">
            <label htmlFor="rows" className="flex-1">
              Aantal boutrijen
            </label>
            <div className="flex h-[17px] w-[30px] items-center border border-[#8a8a8a] bg-white pr-[3px]">
              <input id="rows" defaultValue="5" className="w-4 min-w-0 text-right text-[#1d1d1d] outline-none" />
              <Svg w={9} h={11} box="-4 0 9 11">
                <path d="M0 3h5L2.500 0zM0 8h5l-2.500 3z" fill="#333" />
              </Svg>
            </div>
            <Select label="Boutmaat" className="ml-1 w-[39px]" options={['M16', 'M20', 'M24']} />
          </div>
          <label htmlFor="cb" className="mt-[7px] block leading-[14px]">
            Console boven
          </label>
          <Select id="cb" className="mt-[2px]" options={['Geen', 'Console met flens']} />
          <label htmlFor="co" className="mt-1 block leading-[13px]">
            Console onder
          </label>
          <Select id="co" className="mt-[2px]" options={['Console met flens', 'Geen']} />
          <label className="mt-[7px] flex items-center gap-[3px]">
            <input type="checkbox" className="h-[11px] w-[11px] appearance-none border border-[#9c9c9c] bg-linear-to-br from-[#cfcfcf] to-[#fafafa] checked:bg-[#3a6ea5]" />
            Achterlegplaten
          </label>
        </div>
      </div>
    </div>
  );
}

function Dialog() {
  return (
    <div role="dialog" aria-label="Momentverbinding" className="absolute bottom-3 left-[265px] right-[46px] top-[11px] flex flex-col border-x-2 border-[#3a3d44] bg-[#e7e7e7]">
      <header className="flex h-[25px] shrink-0 items-center justify-between bg-linear-to-b from-[#5a5d66] via-[#42454c] via-40% to-[#404248] pl-[6px] pr-2">
        <h1 className="text-[10px] text-[#e4e4e4]">Momentverbinding</h1>
        <button aria-label="Sluiten">
          <Svg w={8}>
            <path d="M1 1l6 6M7 1L1 7" stroke="#eee" strokeWidth="1.600" />
          </Svg>
        </button>
      </header>
      <div className="flex min-h-0 flex-1 overflow-hidden border-l border-white pr-[3px]">
        <ConnectionForm />
        <div className="min-w-0 flex-1 overflow-hidden pt-[2px]">
          <ConnectionDrawing />
        </div>
        <ResultsPanel />
      </div>
      <footer className="flex h-[35px] shrink-0 items-center border-t border-[#cfcfcf] pl-[10px] pr-[11px] pt-1">
        <Svg w={14}>
          <CheckBall x={7} y={7} r={6} />
        </Svg>
        <p className="flex-1 whitespace-pre pl-2 text-[9px] font-bold text-[#2e2e2e]">Mj,b1,Ed = 120,00 kNm &lt; Mj,b1,Rd = 142,67 kNm  (u.c.=0,84) gelimiteerd door:  Kolomlijf op afschuiving</p>
        <button className="h-[23px] w-[58px] rounded-[2px] border border-[#8f8f8f] bg-linear-to-b from-[#fafafa] via-[#cfcfcf] via-50% to-[#f2f2f2] text-[9px] text-[#333]">Annuleer</button>
        <button className="ml-[5px] h-[23px] w-[57px] rounded-[2px] border border-[#5f8fae] bg-linear-to-b from-[#fafafa] via-[#cfcfcf] via-50% to-[#f2f2f2] p-px text-[9px] text-[#333]">
          <span className="flex h-full items-center justify-center border border-dotted border-[#3f7fa6]">OK</span>
        </button>
      </footer>
      <div className="h-[26px] shrink-0 bg-linear-to-b from-[#565962] via-[#33353b] via-40% to-[#2b2d32]" />
    </div>
  );
}

/* ---------- window ---------- */

function TitleBar() {
  return (
    <div>
      <header className="flex h-[26px] items-center border-t border-[#5b6b85] bg-white">
        <div className="z-10 -mb-[24px] ml-[2px] flex h-[41px] w-[41px] shrink-0 items-center justify-center rounded-full bg-white">
          <button aria-label="Applicatiemenu" className="flex h-8 w-8 items-center justify-center rounded-full border border-[#8c8c8c] bg-linear-to-br from-[#fafafa] to-[#a9a9a9]">
            <Svg w={18} h={24}>
              <path d="M3.500 22V2.500h11V22M3.500 13.500h11" stroke="#333" strokeWidth="1.600" />
              <path d="M6.500 5v6M11.500 5v6" stroke="#1f35d0" strokeWidth="1.400" />
              <path d="M4.500 9h4l-2 3zM9.500 9h4l-2 3z" fill="#1f35d0" />
              <path d="M5 22l4-7 4 7" stroke="#333" fill="#fff" />
              <path d="M1 22.500h5M12 22.500h5" stroke="#111" strokeWidth="2" />
            </Svg>
          </button>
        </div>
        <div className="-ml-2 flex h-[21px] items-center gap-[5px] rounded-r-full bg-[#b9b9b9] pl-4 pr-3">
          <button aria-label="Nieuw"><NewIcon /></button>
          <button aria-label="Openen"><OpenIcon /></button>
          <button aria-label="Opslaan"><SaveIcon /></button>
          <button aria-label="Opslaan als"><SaveIcon extra /></button>
          <button aria-label="Ongedaan maken"><UndoIcon /></button>
          <button aria-label="Opnieuw"><RedoIcon /></button>
        </div>
        <button aria-label="Werkbalk aanpassen" className="ml-1">
          <Svg w={5} h={6}>
            <path d="M0.500 0.500h4" stroke="#333" />
            <path d="M0 3h5L2.500 6z" fill="#333" />
          </Svg>
        </button>
        <h1 className="flex-1 whitespace-pre pr-[80px] text-center font-['Open_Sans','Noto_Sans',sans-serif] text-[12px] text-[#222]">XFrame2d - 3.01.01     Struct4U b.v.</h1>
        <div className="flex items-center gap-7 pr-4">
          <button aria-label="Minimaliseren"><Svg w={10}><path d="M0 5.500h9" stroke="#999" /></Svg></button>
          <button aria-label="Maximaliseren"><Svg w={10}><path d="M1.500 1.500h7v7h-7z" stroke="#888" /></Svg></button>
          <button aria-label="Venster sluiten"><Svg w={10}><path d="M1 1l8 8M9 1L1 9" stroke="#888" /></Svg></button>
        </div>
      </header>
      <nav className="flex h-[19px] items-end bg-[#525252] pl-[52px] text-[9px]">
        <button className="h-[18px] w-[60px] rounded-t-[3px] bg-linear-to-b from-[#f4f5f6] to-[#dfe2e6] text-[#2e3138]">Algemeen</button>
        <button className="h-[18px] px-[18px] text-[#ececec]">Instellingen &amp; Help</button>
      </nav>
    </div>
  );
}

function StatusBar() {
  return (
    <footer className="flex h-6 shrink-0 items-center border-b-[3px] border-black bg-linear-to-b from-[#4d5058] via-[#2d2f35] via-40% to-[#25272c] font-['Roboto','Open_Sans',sans-serif] text-[10px] text-[#f0f0f0]">
      <span className="w-[127px] pl-1 text-center">Veranderd</span>
      <span className="h-4 w-px bg-[#55585f]" />
      <span className="min-w-0 flex-1 truncate pl-[5px]">C:\Users\BaaijSE\projecten\BaaijSE_intern\civil\Windows_Frame2d\verificaties\XFrame2d\momentverbindingen\artikel.xfr2</span>
      <span className="w-[47px] shrink-0 whitespace-nowrap">Knoop : 3</span>
      <span className="w-[181px] shrink-0 whitespace-nowrap">Coördinaten : X=6000 mm Z=3000 mm</span>
      <span className="h-4 w-px bg-[#77797f]" />
      <span className="w-9 shrink-0 pl-[5px]">100 %</span>
      <button aria-label="Uitzoomen">
        <Svg w={13}>
          <circle cx="6.500" cy="6.500" r="6" fill="#d5d5d5" />
          <path d="M3 6.500h7" stroke="#222" strokeWidth="1.800" />
        </Svg>
      </button>
      <input
        type="range"
        aria-label="Zoomniveau"
        defaultValue={48}
        className="mx-px h-3 w-[140px] appearance-none bg-[linear-gradient(90deg,#e0a63c_48%,#9fb0bd_48%)] bg-[length:100%_2px] bg-center bg-no-repeat [&::-webkit-slider-thumb]:h-3 [&::-webkit-slider-thumb]:w-2 [&::-webkit-slider-thumb]:appearance-none [&::-webkit-slider-thumb]:rounded-b-full [&::-webkit-slider-thumb]:bg-[#f3c75c]"
      />
      <button aria-label="Inzoomen">
        <Svg w={13}>
          <circle cx="6.500" cy="6.500" r="6" fill="#d5d5d5" />
          <path d="M3 6.500h7M6.500 3v7" stroke="#222" strokeWidth="1.800" />
        </Svg>
      </button>
      <label className="ml-1 flex h-5 w-[92px] items-center gap-1 border border-[#8a8c91] pl-1">
        <span className="grid">
          <input type="checkbox" defaultChecked className="col-start-1 row-start-1 h-3 w-3 appearance-none border border-[#aaa] bg-white" />
          <svg className="pointer-events-none col-start-1 row-start-1" width="12" height="12" viewBox="0 0 12 12" fill="none">
            <path d="M2.500 6l2.500 3 4.500-6.500" stroke="#222" strokeWidth="1.600" />
          </svg>
        </span>
        License found.
      </label>
      <svg width="14" height="20" viewBox="0 0 14 20" className="shrink-0" fill="#b8b8b8">
        <path d="M10 8h2v2h-2zM10 12h2v2h-2zM6 12h2v2H6zM10 16h2v2h-2zM6 16h2v2H6zM2 16h2v2H2z" />
      </svg>
    </footer>
  );
}

export default function App() {
  return (
    <div className="flex h-screen min-h-[700px] flex-col overflow-hidden bg-[#cdd0d4] font-['DejaVu_Sans_Condensed','Liberation_Sans',sans-serif]">
      <TitleBar />
      <Ribbon />
      <main className="relative flex min-h-0 flex-1 flex-col">
        <div className="flex min-h-0 flex-1 justify-between overflow-hidden border-2 border-b border-[#8f959d] border-r-[#a8adb5] bg-linear-to-b from-[#afc5e1] via-[#d3deeb] via-55% to-[#f8f8f8]">
          <div className="-ml-[2px]">
            <FrameCanvas />
          </div>
          <div className="mr-[19px] flex flex-col justify-end pb-[9px] text-right font-['Liberation_Sans',Arial,sans-serif] text-[10px] font-bold leading-3 text-[#111]">
            <p className="pr-[3px] underline">1 UGT Permanent</p>
            <p className="mt-[13px] pr-[11px]">24,4 kN</p>
            <p className="mt-[13px] pr-[2px]">5,8 mm</p>
            <p>8,3 mm</p>
          </div>
        </div>
        <nav className="flex h-[23px] shrink-0 items-start gap-[2px] bg-[#ececec] pl-[3px] text-[9px]">
          <button className="mt-[2px] h-[18px] w-[56px] rounded-b-[2px] border border-[#666] bg-linear-to-b from-[#6d6d6d] to-[#9a9a9a] text-white">Geometrie</button>
          <button className="mt-[2px] h-[18px] w-[60px] rounded-b-[2px] border border-[#666] bg-linear-to-b from-[#6d6d6d] to-[#9a9a9a] text-white">Belastingen</button>
          <button className="h-5 w-[57px] rounded-b-[3px] border border-t-0 border-[#aaa] bg-[#f7f7f7] text-[#333]">Resultaten</button>
        </nav>
        <Dialog />
      </main>
      <StatusBar />
    </div>
  );
}
